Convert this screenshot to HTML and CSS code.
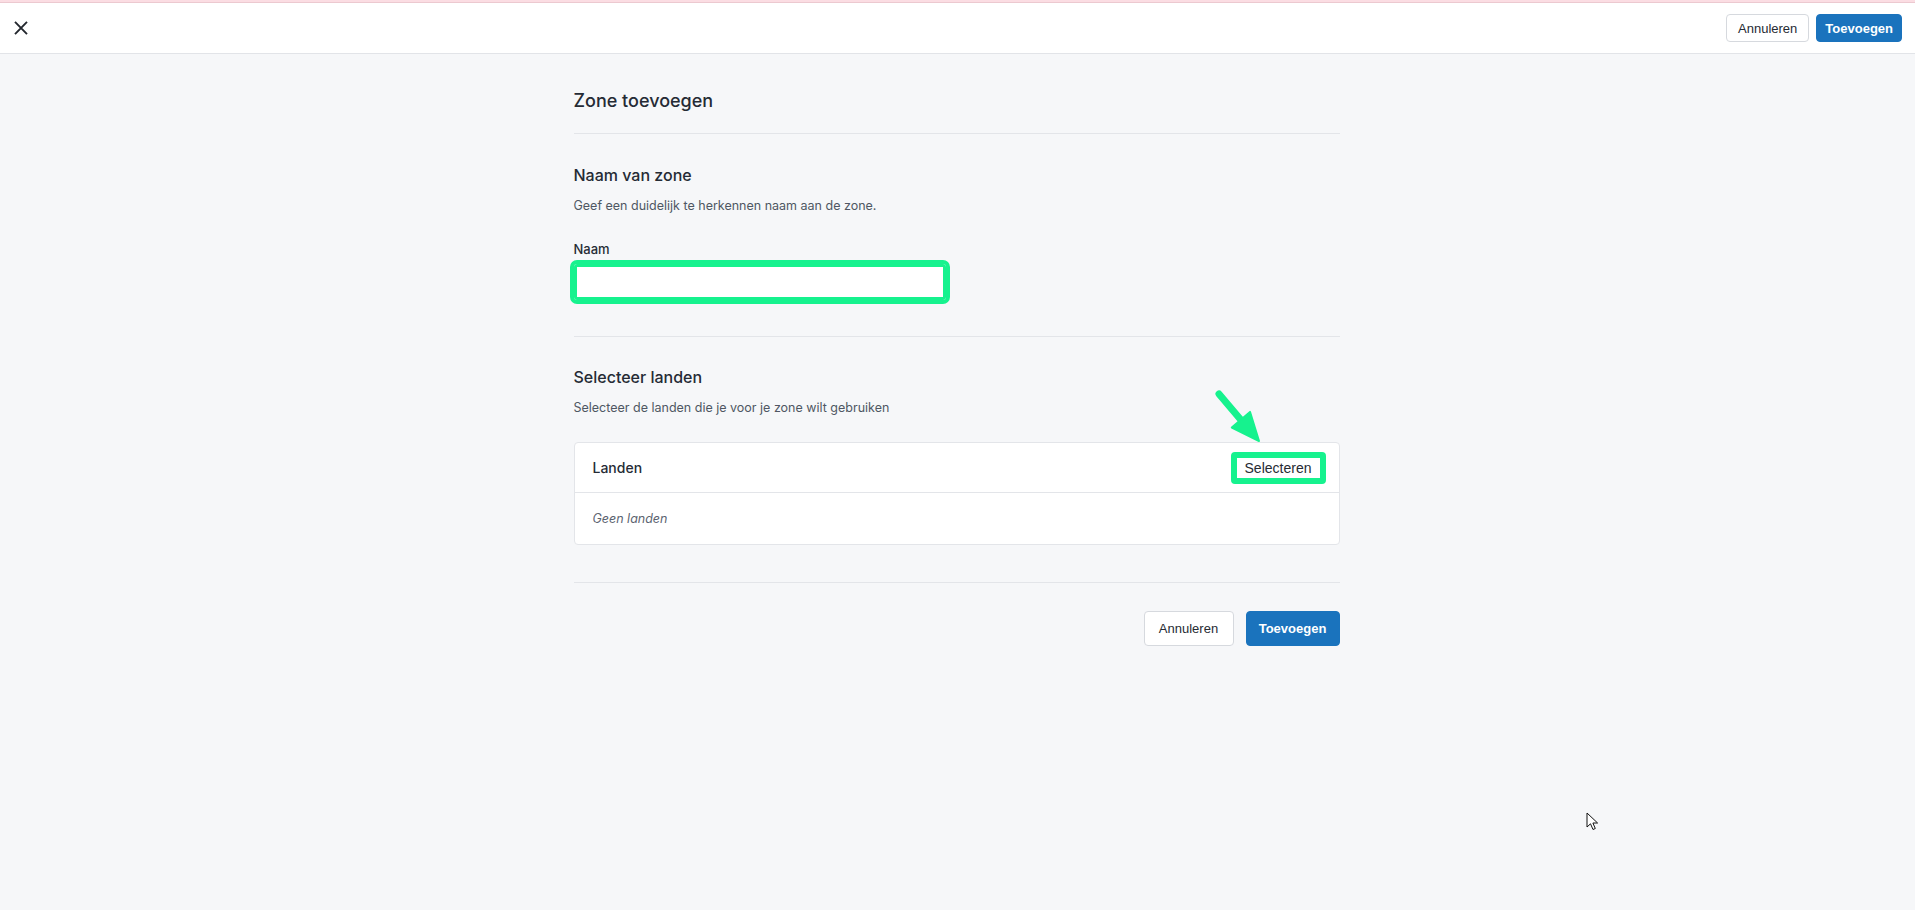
FILE: index.html
```html
<!DOCTYPE html>
<html lang="nl">
<head>
  <meta charset="UTF-8">
  <meta name="viewport" content="width=device-width, initial-scale=1.0">
  <title>Zone toevoegen</title>
  <link rel="stylesheet" href="styles.css">
</head>
<body>
  <div class="page-top"></div>
  <header class="topbar">
    <button class="close-btn" aria-label="Sluiten">
      <svg width="16" height="14" viewBox="0 0 16 14"><path d="M2 0.8 L14 13.2 M14 0.8 L2 13.2" stroke="#23272e" stroke-width="1.9" fill="none"/></svg>
    </button>
    <div class="topbar-actions">
      <button class="btn btn-secondary btn-small">Annuleren</button>
      <button class="btn btn-primary btn-small">Toevoegen</button>
    </div>
  </header>

  <main class="form">
    <div class="form-head">
      <h1>Zone toevoegen</h1>
    </div>

    <section class="form-section section-name">
      <h2>Naam van zone</h2>
      <p class="hint">Geef een duidelijk te herkennen naam aan de zone.</p>
      <label class="field-label" for="zone-name">Naam</label>
      <input id="zone-name" class="text-input" type="text">
    </section>

    <section class="form-section section-countries">
      <h2>Selecteer landen</h2>
      <p class="hint">Selecteer de landen die je voor je zone wilt gebruiken</p>
      <div class="card">
        <svg class="pointer-arrow" width="56" height="60" viewBox="0 0 56 60">
          <path d="M5 7 L27 33" stroke="#16f28e" stroke-width="7" stroke-linecap="round"/>
          <polygon points="45,54 17.8,40.5 36,24.9" fill="#16f28e" stroke="#16f28e" stroke-width="2" stroke-linejoin="round"/>
        </svg>
        <div class="card-header">
          <span class="card-title">Landen</span>
          <button class="link-btn">Selecteren</button>
        </div>
        <div class="card-body">
          <em>Geen landen</em>
        </div>
      </div>
    </section>

    <div class="form-footer">
      <button class="btn btn-secondary">Annuleren</button>
      <button class="btn btn-primary">Toevoegen</button>
    </div>
  </main>

  <svg class="mouse-cursor" width="14" height="20" viewBox="0 0 14 20">
    <path d="M1 1 L1 15 L4.5 11.8 L7 17.5 L9.3 16.5 L6.9 11 L11.6 11 Z" fill="#fff" stroke="#111" stroke-width="1" stroke-linejoin="round"/>
  </svg>
</body>
</html>
```

FILE: styles.css
```css
body {
  margin: 0;
  font-family: Inter, "Liberation Sans", Arial, sans-serif;
  background-color: #f6f7f9;
  color: #252b35;
}
.page-top {
  height: 2px;
  background-color: #fbdde3;
  border-bottom: 1px solid #ecc9d0;
}
.topbar {
  height: 50px;
  background-color: #fff;
  border-bottom: 1px solid #e2e4e8;
  display: flex;
  justify-content: space-between;
  align-items: center;
  padding: 0 13px 0 12px;
}
.close-btn {
  background: none;
  border: none;
  padding: 0;
  width: 18px;
  height: 18px;
  display: flex;
  align-items: center;
  justify-content: center;
  cursor: pointer;
}
.topbar-actions {
  display: flex;
  gap: 7px;
}
.btn {
  font-family: "Liberation Sans", Arial, sans-serif;
  font-size: 13px;
  height: 35px;
  padding: 0 16px;
  border-radius: 4px;
  cursor: pointer;
}
.btn-small {
  height: 28px;
  padding: 0 11px;
}
.btn-primary.btn-small {
  padding: 0 8px;
}
.btn-secondary {
  background-color: #fff;
  border: 1px solid #d6d9de;
  color: #262b33;
}
.btn-primary {
  background-color: #1a73bd;
  border: 1px solid #1a73bd;
  color: #fff;
  font-weight: bold;
}
.form {
  width: 766px;
  margin: 0 auto;
  padding-right: 2px;
}
.form-head {
  padding: 35px 0 20px;
  border-bottom: 1px solid #e3e5e9;
}
.form-head h1 {
  margin: 0;
  font-size: 18px;
  line-height: 24px;
  font-weight: 500;
}
.form-section {
  border-bottom: 1px solid #e3e5e9;
}
.section-name {
  padding: 30px 0 36px;
}
.section-countries {
  padding: 29px 0 37px;
}
.form-section h2 {
  margin: 0;
  font-size: 16px;
  line-height: 22px;
  font-weight: 500;
}
.hint {
  margin: 11px 0 0;
  font-size: 12.5px;
  line-height: 18px;
  color: #4f5763;
}
.field-label {
  display: block;
  margin-top: 25px;
  font-size: 13px;
  line-height: 18px;
  font-weight: 500;
}
.text-input {
  display: block;
  box-sizing: border-box;
  width: 372px;
  height: 36px;
  margin-top: 6px;
  background-color: #fff;
  border: 3px solid #16f28e;
  outline: 4px solid #16f28e;
  border-radius: 3px;
}
.card {
  position: relative;
  margin-top: 25px;
  background-color: #fff;
  border: 1px solid #e3e5e9;
  border-radius: 4px;
}
.pointer-arrow {
  position: absolute;
  left: 639px;
  top: -56px;
}
.card-header {
  height: 49px;
  display: flex;
  justify-content: space-between;
  align-items: center;
  padding: 0 13px 0 18px;
  border-bottom: 1px solid #e3e5e9;
}
.card-title {
  font-size: 14px;
  font-weight: 500;
}
.link-btn {
  box-sizing: border-box;
  font-family: "Liberation Sans", Arial, sans-serif;
  font-size: 14px;
  color: #262b33;
  background-color: #fff;
  width: 95px;
  height: 32px;
  padding: 0;
  border: 6px solid #16f28e;
  border-radius: 4px;
  cursor: pointer;
}
.card-body {
  height: 51px;
  display: flex;
  align-items: center;
  padding: 0 18px;
  font-size: 12.5px;
  color: #5c6471;
}
.form-footer {
  display: flex;
  justify-content: flex-end;
  gap: 12px;
  padding-top: 28px;
}
.form-footer .btn-secondary {
  width: 90px;
  padding: 0;
}
.form-footer .btn-primary {
  width: 94px;
  padding: 0;
}
.mouse-cursor {
  position: absolute;
  left: 1586px;
  top: 812px;
}
```
